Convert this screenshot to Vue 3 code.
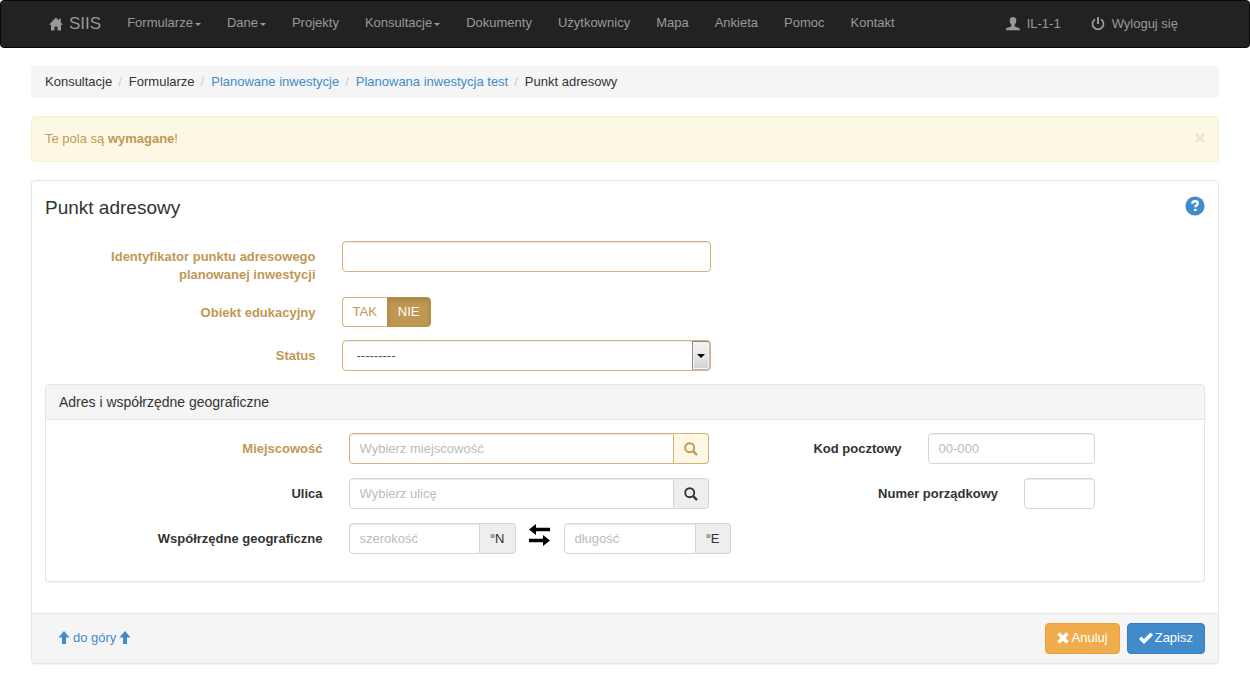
<script setup>
import { ref } from 'vue'

const menu = [
  { label: 'Formularze', dropdown: true },
  { label: 'Dane', dropdown: true },
  { label: 'Projekty' },
  { label: 'Konsultacje', dropdown: true },
  { label: 'Dokumenty' },
  { label: 'Użytkownicy' },
  { label: 'Mapa' },
  { label: 'Ankieta' },
  { label: 'Pomoc' },
  { label: 'Kontakt' }
]

const crumbs = [
  { label: 'Konsultacje' },
  { label: 'Formularze' },
  { label: 'Planowane inwestycje', link: true },
  { label: 'Planowana inwestycja test', link: true },
  { label: 'Punkt adresowy' }
]

const educational = ref('nie')
const alertOpen = ref(true)
</script>

<template>
  <nav class="navbar">
    <a class="brand" href="#">
      <svg width="14" height="14" viewBox="0 0 14 14" aria-hidden="true">
        <path d="M7 .5 0 7.800h2v5.700h3.500V9.500h3v4H12V7.800h2l-2.200-2.300V1.800h-2v1.600z" />
      </svg>
      <span>SIIS</span>
    </a>
    <ul class="menu">
      <li v-for="item in menu" :key="item.label">
        <a href="#">{{ item.label }}<span v-if="item.dropdown" class="caret"></span></a>
      </li>
    </ul>
    <ul class="menu user-menu">
      <li>
        <a href="#">
          <svg width="14" height="14" viewBox="0 0 14 14" aria-hidden="true">
            <path d="M7 0C4.900 0 3.700 1.400 3.700 3.600c0 1.900.7 3.500 1.700 4.300v1.300C4.800 10 .3 10.500 0 12v1.200h14V12c-.3-1.500-4.800-2-5.400-2.800V7.900c1-.8 1.700-2.400 1.700-4.300C10.300 1.400 9.100 0 7 0z" />
          </svg>
          <span>IL-1-1</span>
        </a>
      </li>
      <li>
        <a href="#">
          <svg width="14" height="14" viewBox="0 0 14 14" fill="none" stroke="currentColor" aria-hidden="true">
            <path d="M4 2.200a5.500 5.500 0 1 0 6 0" stroke-width="1.800" />
            <path d="M7 0v7" stroke-width="2" />
          </svg>
          <span>Wyloguj się</span>
        </a>
      </li>
    </ul>
  </nav>

  <main class="page">
    <ol class="breadcrumb">
      <li v-for="crumb in crumbs" :key="crumb.label">
        <a v-if="crumb.link" href="#">{{ crumb.label }}</a>
        <span v-else>{{ crumb.label }}</span>
      </li>
    </ol>

    <div v-if="alertOpen" class="alert" role="alert">
      <span>Te pola są <strong>wymagane</strong>!</span>
      <button type="button" class="close" aria-label="Zamknij" @click="alertOpen = false">
        <svg width="10" height="10" viewBox="0 0 10 10" fill="none" stroke="currentColor" stroke-width="2.400" aria-hidden="true">
          <path d="M1 1l8 8M9 1 1 9" />
        </svg>
      </button>
    </div>

    <form class="panel" @submit.prevent>
      <div class="panel-body">
        <header class="title-row">
          <h1>Punkt adresowy</h1>
          <a href="#" class="help" aria-label="Pomoc">
            <svg width="20" height="20" viewBox="0 0 20 20" aria-hidden="true">
              <circle cx="10" cy="10" r="9.600" fill="currentColor" />
              <path d="M7.300 7.800C7.300 5.900 8.400 5.200 10.100 5.200c1.600 0 2.700.7 2.700 2.100 0 2-2.500 1.900-2.500 4" fill="none" stroke="#fff" stroke-width="2.400" />
              <path d="M9 12.900h2.600v2.100H9z" fill="#fff" />
            </svg>
          </a>
        </header>

        <div class="grid outer-grid">
          <label class="required c3" for="ident">Identyfikator punktu adresowego planowanej inwestycji</label>
          <div class="c4"><input id="ident" class="control warn" type="text" /></div>
        </div>

        <div class="grid outer-grid" role="radiogroup" aria-labelledby="edu-label">
          <span id="edu-label" class="field-label required c3">Obiekt edukacyjny</span>
          <div class="toggle c4">
            <label :class="{ active: educational === 'tak' }">
              <input v-model="educational" type="radio" name="edu" value="tak" />TAK
            </label>
            <label :class="{ active: educational === 'nie' }">
              <input v-model="educational" type="radio" name="edu" value="nie" />NIE
            </label>
          </div>
        </div>

        <div class="grid outer-grid">
          <label class="required c3" for="status">Status</label>
          <div class="c4">
            <div class="select-box">
              <select id="status" class="control warn"><option>---------</option></select>
              <span class="select-arrow" aria-hidden="true"></span>
            </div>
          </div>
        </div>

        <section class="panel inner">
          <h2>Adres i współrzędne geograficzne</h2>
          <div class="panel-body">
            <div class="grid">
              <label class="required c3" for="city">Miejscowość</label>
              <div class="group c4">
                <input id="city" class="control warn" type="text" placeholder="Wybierz miejscowość" />
                <button type="button" class="addon warn" aria-label="Szukaj miejscowości">
                  <svg width="14" height="14" viewBox="0 0 14 14" fill="none" stroke="currentColor" aria-hidden="true">
                    <circle cx="5.700" cy="5.700" r="4.500" stroke-width="1.900" />
                    <path d="M9 9l4 4" stroke-width="2.400" />
                  </svg>
                </button>
              </div>
              <label class="c2" for="zip">Kod pocztowy</label>
              <div class="c2"><input id="zip" class="control" type="text" placeholder="00-000" /></div>
            </div>

            <div class="grid">
              <label class="c3" for="street">Ulica</label>
              <div class="group c4">
                <input id="street" class="control" type="text" placeholder="Wybierz ulicę" />
                <button type="button" class="addon" aria-label="Szukaj ulicy">
                  <svg width="14" height="14" viewBox="0 0 14 14" fill="none" stroke="currentColor" aria-hidden="true">
                    <circle cx="5.700" cy="5.700" r="4.500" stroke-width="1.900" />
                    <path d="M9 9l4 4" stroke-width="2.400" />
                  </svg>
                </button>
              </div>
              <label class="c3" for="number">Numer porządkowy</label>
              <div class="c1"><input id="number" class="control" type="text" /></div>
            </div>

            <div class="grid">
              <label class="c3" for="lat">Współrzędne geograficzne</label>
              <div class="group c2">
                <input id="lat" class="control" type="text" placeholder="szerokość" />
                <span class="addon">°N</span>
              </div>
              <div class="swap-group">
                <button type="button" class="swap" aria-label="Zamień współrzędne">
                  <svg width="22" height="22" viewBox="0 0 22 22" aria-hidden="true">
                    <path d="M0 5.500 7 0v3.700h14v3.600H7V11zM21 16.500 14 22v-3.700H0v-3.600h14V11z" />
                  </svg>
                </button>
                <div class="group">
                  <input id="lon" class="control" type="text" placeholder="długość" aria-label="Długość geograficzna" />
                  <span class="addon">°E</span>
                </div>
              </div>
            </div>
          </div>
        </section>
      </div>

      <footer class="panel-footer">
        <a href="#" class="to-top">
          <svg width="12" height="14" viewBox="0 0 12 14" aria-hidden="true"><path d="M6 0l5.500 6.500H8v6.500H4V6.500H.5z" /></svg>
          <span>do góry</span>
          <svg width="12" height="14" viewBox="0 0 12 14" aria-hidden="true"><path d="M6 0l5.500 6.500H8v6.500H4V6.500H.5z" /></svg>
        </a>
        <div class="actions">
          <button type="button" class="btn cancel">
            <svg width="12" height="12" viewBox="0 0 12 12" aria-hidden="true">
              <path d="M2.800.3 6 3.500 9.200.3l2.500 2.500L8.500 6l3.200 3.200-2.500 2.500L6 8.500l-3.200 3.200L.3 9.200 3.500 6 .3 2.800z" />
            </svg>
            <span>Anuluj</span>
          </button>
          <button type="submit" class="btn save">
            <svg width="14" height="12" viewBox="0 0 14 12" aria-hidden="true">
              <path d="M0 7l2.500-2.500L5 7 11.500.5 14 3 5 12z" />
            </svg>
            <span>Zapisz</span>
          </button>
        </div>
      </footer>
    </form>
  </main>
</template>

<style>
body {
  background: #fff;
}
#app {
  color: #333;
  font: 13px/18px "Liberation Sans", Arial, sans-serif;
}
</style>

<style scoped>
*,
*::before {
  box-sizing: border-box;
}
a {
  color: #428bca;
  text-decoration: none;
}
svg {
  display: block;
  flex: none;
}
svg:not([fill]) {
  fill: currentColor;
}
ul,
ol {
  list-style: none;
  margin: 0;
  padding: 0;
}
input,
select,
button {
  font: inherit;
  color: inherit;
}
button {
  cursor: pointer;
}

.navbar {
  display: flex;
  align-items: center;
  min-height: 48px;
  padding: 0 58px 0 48px;
  border: 1px solid #080808;
  border-radius: 4px;
  background: #222;
}
.navbar a {
  display: flex;
  align-items: center;
  color: #999;
}
.brand {
  gap: 6px;
  margin-right: 13px;
  font-size: 17px;
}
.menu {
  display: flex;
  padding-bottom: 2px;
}
.menu a {
  padding: 4px 13px;
}
.caret {
  margin: 2px 0 0 2px;
  border: 3px solid transparent;
  border-top-color: currentColor;
  border-bottom: 0;
}
.user-menu {
  gap: 4px;
  margin-left: auto;
  padding-bottom: 0;
}
.user-menu a {
  gap: 7px;
}

.page {
  padding: 18px 31px;
}
.breadcrumb {
  display: flex;
  flex-wrap: wrap;
  margin-bottom: 18px;
  padding: 7px 14px;
  border-radius: 4px;
  background: #f5f5f5;
}
.breadcrumb li + li::before {
  content: "/";
  padding: 0 7px 0 6px;
  color: #ccc;
}
.alert {
  display: flex;
  justify-content: space-between;
  margin-bottom: 18px;
  padding: 13px;
  border: 1px solid #faf2cc;
  border-radius: 4px;
  background: #fcf8e3;
  color: #c09853;
}
.close {
  display: flex;
  align-items: center;
  padding: 0 0 2px;
  border: 0;
  background: none;
  color: #eee3c5;
}

.panel {
  border: 1px solid #e5e5e5;
  border-radius: 4px;
  background: #fff;
  box-shadow: 0 1px 1px rgba(0, 0, 0, 0.05);
}
.panel-body {
  padding: 13px;
}
.title-row {
  display: flex;
  justify-content: space-between;
  align-items: flex-start;
  margin-bottom: 20px;
}
.help {
  padding-top: 2px;
}
h1 {
  margin: 0;
  font-size: 19px;
  font-weight: 400;
  line-height: 27px;
}
.grid {
  display: grid;
  grid-template-columns: repeat(12, minmax(0, 1fr));
  align-items: start;
  margin: 0 -13px 14px;
}
.outer-grid {
  margin-bottom: 13px;
}
.grid > * {
  margin: 0 13px;
}
.c1 {
  grid-column: span 1;
}
.c2 {
  grid-column: span 2;
}
.c3 {
  grid-column: span 3;
}
.c4 {
  grid-column: span 4;
}
.grid > label,
.field-label {
  padding-top: 7px;
  font-weight: 700;
  text-align: right;
}
.required {
  color: #c09853;
}
.control {
  display: block;
  width: 100%;
  min-width: 0;
  height: 31px;
  margin: 0;
  padding: 5px 10px;
  border: 1px solid #d6d6d6;
  border-radius: 4px;
  background: #fff;
  color: #555;
  box-shadow: inset 0 1px 1px rgba(0, 0, 0, 0.075);
}
.control::placeholder {
  color: #bbb;
  opacity: 1;
}
.control.warn {
  border-color: #d4b47a;
}
.toggle {
  display: flex;
}
.toggle label {
  position: relative;
  padding: 5px 10px;
  border: 1px solid #d4b47a;
  color: #c09853;
  cursor: pointer;
}
.toggle label:first-child {
  border-right: 0;
  border-radius: 4px 0 0 4px;
}
.toggle label:last-child {
  border-radius: 0 4px 4px 0;
}
.toggle label.active {
  border-color: #b58f4d;
  background: #c09853;
  color: #fff;
  box-shadow: inset 0 3px 5px rgba(0, 0, 0, 0.125);
}
.toggle input {
  position: absolute;
  opacity: 0;
}
.select-box {
  position: relative;
}
select.control {
  appearance: none;
  padding-left: 14px;
}
.select-arrow {
  position: absolute;
  top: 1px;
  right: 1px;
  bottom: 1px;
  display: grid;
  place-items: center;
  width: 18px;
  border: 1px solid #8a8a8a;
  border-right-color: #bbb;
  border-bottom-color: #bbb;
  border-radius: 0 3px 3px 0;
  background: linear-gradient(#f2f2f2, #e8e8e8 50%, #d2d2d2);
  box-shadow: inset 0 0 0 1px #f5f5f5;
  pointer-events: none;
}
.select-arrow::before {
  content: "";
  border: 4px solid transparent;
  border-top-color: #000;
  border-bottom: 0;
}

.inner {
  margin-bottom: 18px;
}
h2 {
  margin: 0;
  padding: 8px 13px;
  border-bottom: 1px solid #e5e5e5;
  border-radius: 3px 3px 0 0;
  background: #f5f5f5;
  font-size: 14px;
  font-weight: 400;
  line-height: 18px;
}
.group {
  display: flex;
}
.group .control {
  flex: 1;
  border-radius: 4px 0 0 4px;
}
.addon {
  display: flex;
  align-items: center;
  padding: 5px 10px;
  border: 1px solid #d6d6d6;
  border-left: 0;
  border-radius: 0 4px 4px 0;
  background: #eee;
}
.addon.warn {
  border-color: #d4b47a;
  background: #fcf8e3;
  color: #c09853;
}
.swap-group {
  display: flex;
  grid-column: span 3;
  gap: 13px;
  margin-left: 0;
}
.swap-group .group {
  flex: 0 0 167px;
}
.swap {
  padding: 0 0 8px;
  border: 0;
  background: none;
  color: #000;
}

.panel-footer {
  display: flex;
  align-items: center;
  justify-content: space-between;
  padding: 9px 13px;
  border-top: 1px solid #e5e5e5;
  border-radius: 0 0 3px 3px;
  background: #f5f5f5;
}
.to-top {
  display: flex;
  align-items: center;
  gap: 3px;
  padding: 0 0 2px 13px;
}
.actions {
  display: flex;
  gap: 7px;
}
.btn {
  display: flex;
  align-items: center;
  gap: 3px;
  padding: 5px 11px 6px;
  border: 1px solid #eea236;
  border-radius: 4px;
  background: #f0ad4e;
  color: #fff;
}
.save {
  gap: 2px;
  border-color: #357ebd;
  background: #428bca;
}
</style>
